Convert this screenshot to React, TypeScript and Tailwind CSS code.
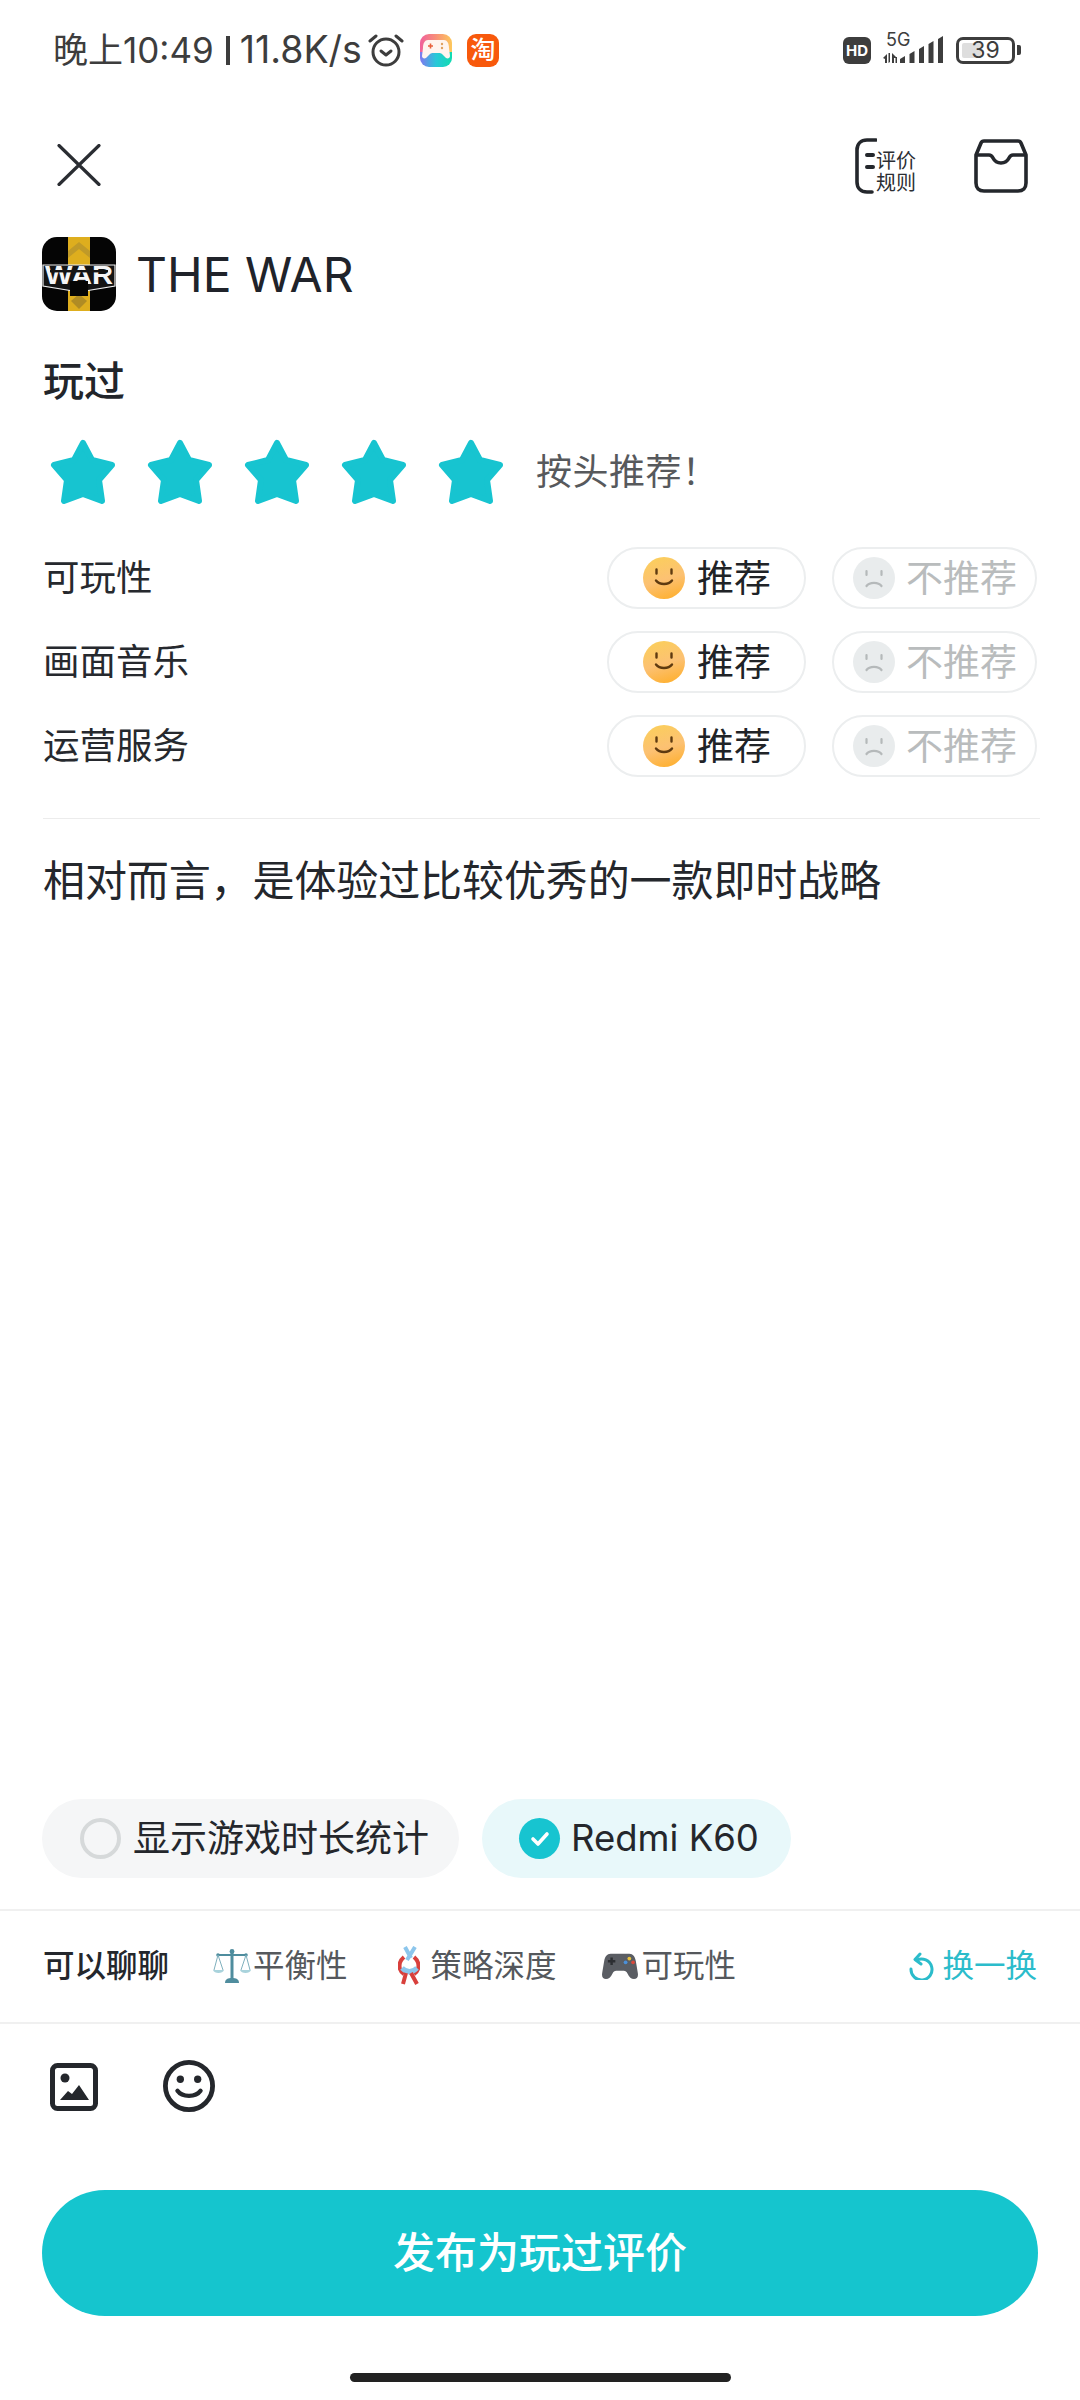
const rows = ['可玩性', '画面音乐', '运营服务'];

function Star() {
    return (
        <svg width="66" height="66" viewBox="0 0 66 66" className="shrink-0">
            <polygon
                points="33,4 42,21 62,26 49,41 52,62 33,55 14,62 17,41 4,26 24,21"
                fill="#17c4d0"
                stroke="#17c4d0"
                strokeWidth="6"
                strokeLinejoin="round"
            />
        </svg>
    );
}

function SmileFace() {
    return (
        <svg width="42" height="42" viewBox="0 0 42 42" className="shrink-0">
            <defs>
                <linearGradient id="smile" x1="0.3" y1="0" x2="0.6" y2="1">
                    <stop offset="0" stopColor="#fbce5c" />
                    <stop offset="0.55" stopColor="#fcc173" />
                    <stop offset="1" stopColor="#feb134" />
                </linearGradient>
            </defs>
            <circle cx="21" cy="21" r="21" fill="url(#smile)" />
            <path d="M13.5 12.5v4M28.5 12.5v4" stroke="#5e3a10" strokeWidth="2.4" strokeLinecap="round" />
            <path d="M13 23.5c3.5 4.6 12.5 4.6 16 0" fill="none" stroke="#5e3a10" strokeWidth="2.4" strokeLinecap="round" />
        </svg>
    );
}

function SadFace() {
    return (
        <svg width="42" height="42" viewBox="0 0 42 42" className="shrink-0">
            <circle cx="21" cy="21" r="21" fill="#e9eced" />
            <path d="M13.5 14v4M28.5 14v4" stroke="#b5b9ba" strokeWidth="2.2" strokeLinecap="round" />
            <path d="M13.5 29c3-4.2 12-4.2 15 0" fill="none" stroke="#b5b9ba" strokeWidth="2.2" strokeLinecap="round" />
        </svg>
    );
}

function ScalesEmoji() {
    return (
        <svg width="38" height="36" viewBox="0 0 38 36" className="shrink-0">
            <path d="M5 7h28" stroke="#4f8d9e" strokeWidth="2" />
            <path d="M19 3v27" stroke="#4f8d9e" strokeWidth="3" />
            <circle cx="19" cy="3.5" r="2.4" fill="#4f8d9e" />
            <circle cx="5" cy="7" r="1.8" fill="#4f8d9e" />
            <circle cx="33" cy="7" r="1.8" fill="#4f8d9e" />
            <path d="M5 7L1 22M5 7l5 15M33 7l-5 15M33 7l4 15" stroke="#7fb0bd" strokeWidth="1" fill="none" />
            <path d="M0 22h11c-1 4-10 4-11 0zM27 22h11c-1 4-10 4-11 0z" fill="#a9d3dc" />
            <path d="M12 35c0-4 3-5 7-5s7 1 7 5z" fill="#4f8d9e" />
        </svg>
    );
}

function KnotEmoji() {
    return (
        <svg width="22" height="40" viewBox="0 0 22 40" className="shrink-0">
            <path d="M7 1l6 11M17 1L9 14" stroke="#8cc6ec" strokeWidth="4" fill="none" />
            <path d="M6 11C0 16 0 24 6 28M16 11c6 5 6 13 0 17" stroke="#d8403c" strokeWidth="4" fill="none" />
            <path d="M4 22c5 5 10 5 15 0" stroke="#8cc6ec" strokeWidth="5" fill="none" />
            <path d="M8 27l-3 11M13 27l6 11" stroke="#d8403c" strokeWidth="4" fill="none" />
        </svg>
    );
}

function PadEmoji() {
    return (
        <svg width="36" height="28" viewBox="0 0 38 30" className="shrink-0">
            <path d="M9 2h20c4 0 6 3 7 8l2 12c1 5-1 7-4 7-3 0-5-2-7-6-1-2-2-3-4-3h-8c-2 0-3 1-4 3-2 4-4 6-7 6-3 0-5-2-4-7l2-12C3 5 5 2 9 2z" fill="#5a5d63" />
            <circle cx="29" cy="7" r="2" fill="#e9c23c" />
            <circle cx="33" cy="11" r="2" fill="#d8483c" />
            <circle cx="25" cy="11" r="2" fill="#4a90d9" />
            <path d="M10 6v8M6 10h8" stroke="#2c2e32" strokeWidth="2.6" />
        </svg>
    );
}

function GameCenterIcon() {
    return (
        <svg width="32" height="33" viewBox="0 0 32 33" className="shrink-0 ml-[16px]">
            <defs>
                <linearGradient id="gameTop" x1="0" y1="0" x2="1" y2="0">
                    <stop offset="0" stopColor="#f0609c" />
                    <stop offset="0.5" stopColor="#f89078" />
                    <stop offset="1" stopColor="#fdc85c" />
                </linearGradient>
                <linearGradient id="gameBottom" x1="0" y1="0" x2="1" y2="0">
                    <stop offset="0" stopColor="#7f78f0" />
                    <stop offset="0.5" stopColor="#28c8d8" />
                    <stop offset="1" stopColor="#10dcb0" />
                </linearGradient>
                <clipPath id="gameClip">
                    <rect width="32" height="33" rx="9" />
                </clipPath>
            </defs>
            <g clipPath="url(#gameClip)">
                <rect width="32" height="20" fill="url(#gameTop)" />
                <rect y="18" width="32" height="15" fill="url(#gameBottom)" />
                <path d="M8 6h16c3 0 5 3 5 8l1 8c0 2-2 3-4 2l-4-4c-1-1-2-1-3-1h-6c-1 0-2 0-3 1l-4 4c-2 1-4 0-4-2l1-8c0-5 2-8 5-8z" fill="#fff4ef" />
                <path d="M8 12h5M10.500 9.500v5" stroke="#e8603c" strokeWidth="1.600" />
                <circle cx="22" cy="10" r="1.200" fill="#e0a060" />
                <circle cx="22" cy="14" r="1.200" fill="#e0a060" />
            </g>
        </svg>
    );
}

function StatusBar() {
    return (
        <div className="h-[100px] flex items-center pl-[53px] pr-[59px] text-[#3d3d3d]">
            <span className="text-[35px] leading-none whitespace-nowrap">晚上10:49</span>
            <div className="ml-[12px] w-[4px] h-[29px] bg-[#3d3d3d] shrink-0" />
            <span className="ml-[10px] text-[37.500px] leading-none whitespace-nowrap">11.8K/s</span>
            <svg width="36" height="34" viewBox="0 0 36 34" className="ml-[6px] shrink-0" fill="none" stroke="#3d3d3d" strokeWidth="3" strokeLinecap="round" strokeLinejoin="round">
                <circle cx="18" cy="19" r="13" />
                <path d="M2 8l6-5M34 8l-6-5" />
                <path d="M13 18l5 4 5-4" />
            </svg>
            <GameCenterIcon />
            <div className="ml-[15px] w-[32px] h-[33px] rounded-[9px] shrink-0 bg-[#f8590c] flex items-center justify-center text-white text-[25px] leading-none font-medium">淘</div>
            <div className="flex-1" />
            <div className="w-[28px] h-[27px] rounded-[6px] bg-[#3d3d3d] text-white text-[15px] leading-none font-bold flex items-center justify-center shrink-0">HD</div>
            <div className="ml-[12px] w-[62px] h-[34px] relative shrink-0">
                <span className="absolute left-[3px] top-[-2px] text-[18px] leading-none">5G</span>
                <svg width="62" height="34" viewBox="0 0 62 34" fill="#3d3d3d" className="absolute left-0 top-0">
                    <path d="M0 25l4-4v9H2v-4zM5.500 20v10l1.500-1v-9zM9 20l4 4v1h-2v5H9zM14 24v6h-1.500v-6z" />
                    <path d="M17 26l5-3v7h-5zM26.500 21l5-3v12h-5zM36 16l5-3v17h-5zM45.500 11l5-3v22h-5zM55 6l5-3v27h-5z" />
                </svg>
            </div>
            <div className="ml-[11px] w-[59px] h-[27px] rounded-[7px] border-[3px] border-[#3d3d3d] shrink-0 relative flex items-center justify-center">
                <div className="absolute left-[3px] top-[3px] bottom-[3px] w-[19px] bg-[#dedede] rounded-[2px]" />
                <span className="relative text-[23px] leading-none">39</span>
            </div>
            <div className="ml-[2px] w-[4px] h-[10px] rounded-r-[2px] bg-[#3d3d3d] shrink-0" />
        </div>
    );
}

function Header() {
    return (
        <div className="h-[130px] flex items-center pl-[57px] pr-[52px] text-[#24272c]">
            <svg width="44" height="42" viewBox="0 0 44 42" fill="none" stroke="#2a2d32" strokeWidth="3.200" strokeLinecap="round" className="shrink-0">
                <path d="M2 1.500l40 39M42 1.500l-40 39" />
            </svg>
            <div className="flex-1" />
            <div className="flex items-center mt-[2px]">
                <svg width="22" height="56" viewBox="0 0 22 56" fill="none" stroke="#24272c" strokeWidth="3.600" className="shrink-0" strokeLinecap="round">
                    <path d="M21 2H12C6 2 2 6 2 12v32c0 6 4 10 10 10h5" />
                    <path d="M12 17h6M12 29h6" strokeWidth="4" />
                </svg>
                <div className="ml-[-1px] text-[20px] leading-[22px] text-[#2b2e33] mt-[12px] whitespace-nowrap">
                    <div>评价</div>
                    <div>规则</div>
                </div>
            </div>
            <svg width="54" height="54" viewBox="0 0 54 54" fill="none" stroke="#24272c" strokeWidth="3.600" strokeLinejoin="round" className="ml-[58px] shrink-0 mt-[1px]">
                <path d="M2 16L7 4c.5-1.200 1.500-2 3-2h34c1.500 0 2.500.8 3 2l5 12v28c0 5-3 8-8 8H10c-5 0-8-3-8-8z" />
                <path d="M2 16h13c2 0 3 1 4 3 1.500 3 4 5 8 5s6.500-2 8-5c1-2 2-3 4-3h13" />
            </svg>
        </div>
    );
}

function AppIcon() {
    return (
        <svg width="74" height="74" viewBox="0 0 74 74" className="shrink-0">
            <defs>
                <clipPath id="appclip">
                    <rect width="74" height="74" rx="15" />
                </clipPath>
            </defs>
            <g clipPath="url(#appclip)">
                <rect width="74" height="74" fill="#050505" />
                <rect x="26" width="22" height="74" fill="#deae1e" />
                <path d="M37 5l11 9v7l-11-9-11 9v-7z" fill="#c09a28" />
                <path d="M37 57l8 7-8 8-8-8z" fill="#b08c24" />
                <path d="M1 28h72v21l-36 6-36-6z" fill="#141414" stroke="#f0f0f0" strokeWidth="1.200" />
                <text x="37" y="47" textAnchor="middle" fill="#f6f6f6" fontSize="25" fontWeight="900" textLength="68" lengthAdjust="spacingAndGlyphs" fontFamily="'Liberation Sans', sans-serif">WAR</text>
                <rect x="28" y="44" width="18" height="15" fill="#050505" />
                <rect x="8" y="33" width="58" height="2.400" fill="#141414" />
            </g>
        </svg>
    );
}

function ReviewRow({ label }: { label: string }) {
    return (
        <div className="h-[84px] flex items-center">
            <span className="flex-1 text-[36.500px] leading-none text-[#26292e]">{label}</span>
            <div className="w-[199px] h-[62px] rounded-full border-2 border-[#eceeef] flex items-center pl-[34px] gap-[12px]">
                <SmileFace />
                <span className="text-[37px] leading-none text-[#202327] whitespace-nowrap">推荐</span>
            </div>
            <div className="ml-[26px] w-[205px] h-[62px] rounded-full border-2 border-[#eceeef] flex items-center pl-[19px] gap-[11px]">
                <SadFace />
                <span className="text-[37px] leading-none text-[#b9bcbd] whitespace-nowrap">不推荐</span>
            </div>
        </div>
    );
}

export default function App() {
    return (
        <div className="w-[1080px] h-[2400px] bg-white flex flex-col overflow-hidden font-[Inter,'Noto_Sans_CJK_SC',sans-serif]">
            <StatusBar />
            <Header />

            <div className="px-[43px]">
                <div className="mt-[7px] flex items-center h-[74px] -ml-[1px]">
                    <AppIcon />
                    <h1 className="ml-[20px] mt-[2px] text-[48px] leading-none text-[#20232a] whitespace-nowrap">THE WAR</h1>
                </div>

                <div className="mt-[50px] h-[40px] flex items-center text-[41px] leading-none font-medium text-[#22252a]">玩过</div>

                <div className="mt-[38px] flex items-center h-[66px] pl-[7px]">
                    <div className="flex gap-[31px]">
                        {[0, 1, 2, 3, 4].map(i => (
                            <Star key={i} />
                        ))}
                    </div>
                    <span className="ml-[32px] text-[36px] leading-none tracking-[0.5px] text-[#57595c] whitespace-nowrap">按头推荐！</span>
                </div>

                <div className="mt-[31px]">
                    {rows.map(r => (
                        <ReviewRow key={r} label={r} />
                    ))}
                </div>

                <div className="mt-[30px] -mr-[3px] h-px bg-[#ececec]" />
            </div>

            <div className="flex-1 px-[43px] pt-[36px] text-[42px] tracking-[-0.1px] leading-[52px] text-[#24272c] whitespace-nowrap">相对而言，是体验过比较优秀的一款即时战略</div>

            <div className="flex px-[42px] gap-[23px] h-[79px]">
                <div className="w-[417px] rounded-full bg-[#f5f6f7] flex items-center pl-[38px] gap-[12px]">
                    <div className="w-[41px] h-[41px] rounded-full border-[4px] border-[#d6d9da] shrink-0" />
                    <span className="text-[37px] leading-none text-[#24272c] whitespace-nowrap">显示游戏时长统计</span>
                </div>
                <div className="w-[309px] rounded-full bg-[#e8f8fa] flex items-center pl-[37px] gap-[11px]">
                    <div className="w-[41px] h-[41px] rounded-full bg-[#17c4d0] shrink-0 flex items-center justify-center">
                        <svg width="24" height="20" viewBox="0 0 24 20" fill="none" stroke="#fff" strokeWidth="3.600" strokeLinecap="round" strokeLinejoin="round">
                            <path d="M5 10l5 5 9-10" />
                        </svg>
                    </div>
                    <span className="text-[36.500px] leading-none text-[#24272c] whitespace-nowrap">Redmi K60</span>
                </div>
            </div>

            <div className="mt-[31px] h-[2px] bg-[#f0f0f0]" />

            <div className="h-[111px] flex items-center pl-[43px] pr-[43px] pb-[2px] text-[31.500px] leading-none text-[#55585c] whitespace-nowrap">
                <span className="font-medium text-[#24272c]">可以聊聊</span>
                <div className="ml-[44px] flex items-center gap-[2px]">
                    <ScalesEmoji />
                    <span>平衡性</span>
                </div>
                <div className="ml-[50px] flex items-center gap-[11px]">
                    <KnotEmoji />
                    <span>策略深度</span>
                </div>
                <div className="ml-[45px] flex items-center gap-[4px]">
                    <PadEmoji />
                    <span>可玩性</span>
                </div>
                <div className="flex-1" />
                <svg width="26" height="28" viewBox="0 0 26 28" fill="none" stroke="#2bbccb" strokeWidth="3" strokeLinecap="round" strokeLinejoin="round" className="shrink-0">
                    <path d="M9 8a10.500 10.500 0 1 1-6 9" />
                    <path d="M12 2L7 7.500l6 4.500" />
                </svg>
                <span className="ml-[8px] text-[#2bbccb]">换一换</span>
            </div>

            <div className="h-[2px] bg-[#f0f0f0]" />

            <div className="h-[166px] pt-[36px] flex items-start pl-[50px] text-[#24272c]">
                <svg width="48" height="48" viewBox="0 0 48 48" fill="none" className="shrink-0 mt-[3px]">
                    <rect x="2.500" y="2.500" width="43" height="43" rx="5" stroke="#24272c" strokeWidth="5" />
                    <circle cx="15" cy="15" r="4.500" fill="#24272c" />
                    <path d="M10 37l8-9 4 3 7-9 10 15z" fill="#24272c" />
                </svg>
                <svg width="52" height="52" viewBox="0 0 54 54" fill="none" className="ml-[65px] shrink-0">
                    <circle cx="27" cy="27" r="24.500" stroke="#24272c" strokeWidth="5" />
                    <circle cx="18" cy="20" r="3.800" fill="#24272c" />
                    <circle cx="36" cy="20" r="3.800" fill="#24272c" />
                    <path d="M15 32c5 7 19 7 24 0" stroke="#24272c" strokeWidth="4.500" strokeLinecap="round" />
                </svg>
            </div>

            <div className="px-[42px]">
                <button className="w-full h-[126px] rounded-full bg-[#15c5ce] text-white text-[42px] leading-none font-medium">发布为玩过评价</button>
            </div>

            <div className="mt-[57px] mb-[18px] mx-auto w-[381px] h-[9px] rounded-full bg-[#222]" />
        </div>
    );
}
